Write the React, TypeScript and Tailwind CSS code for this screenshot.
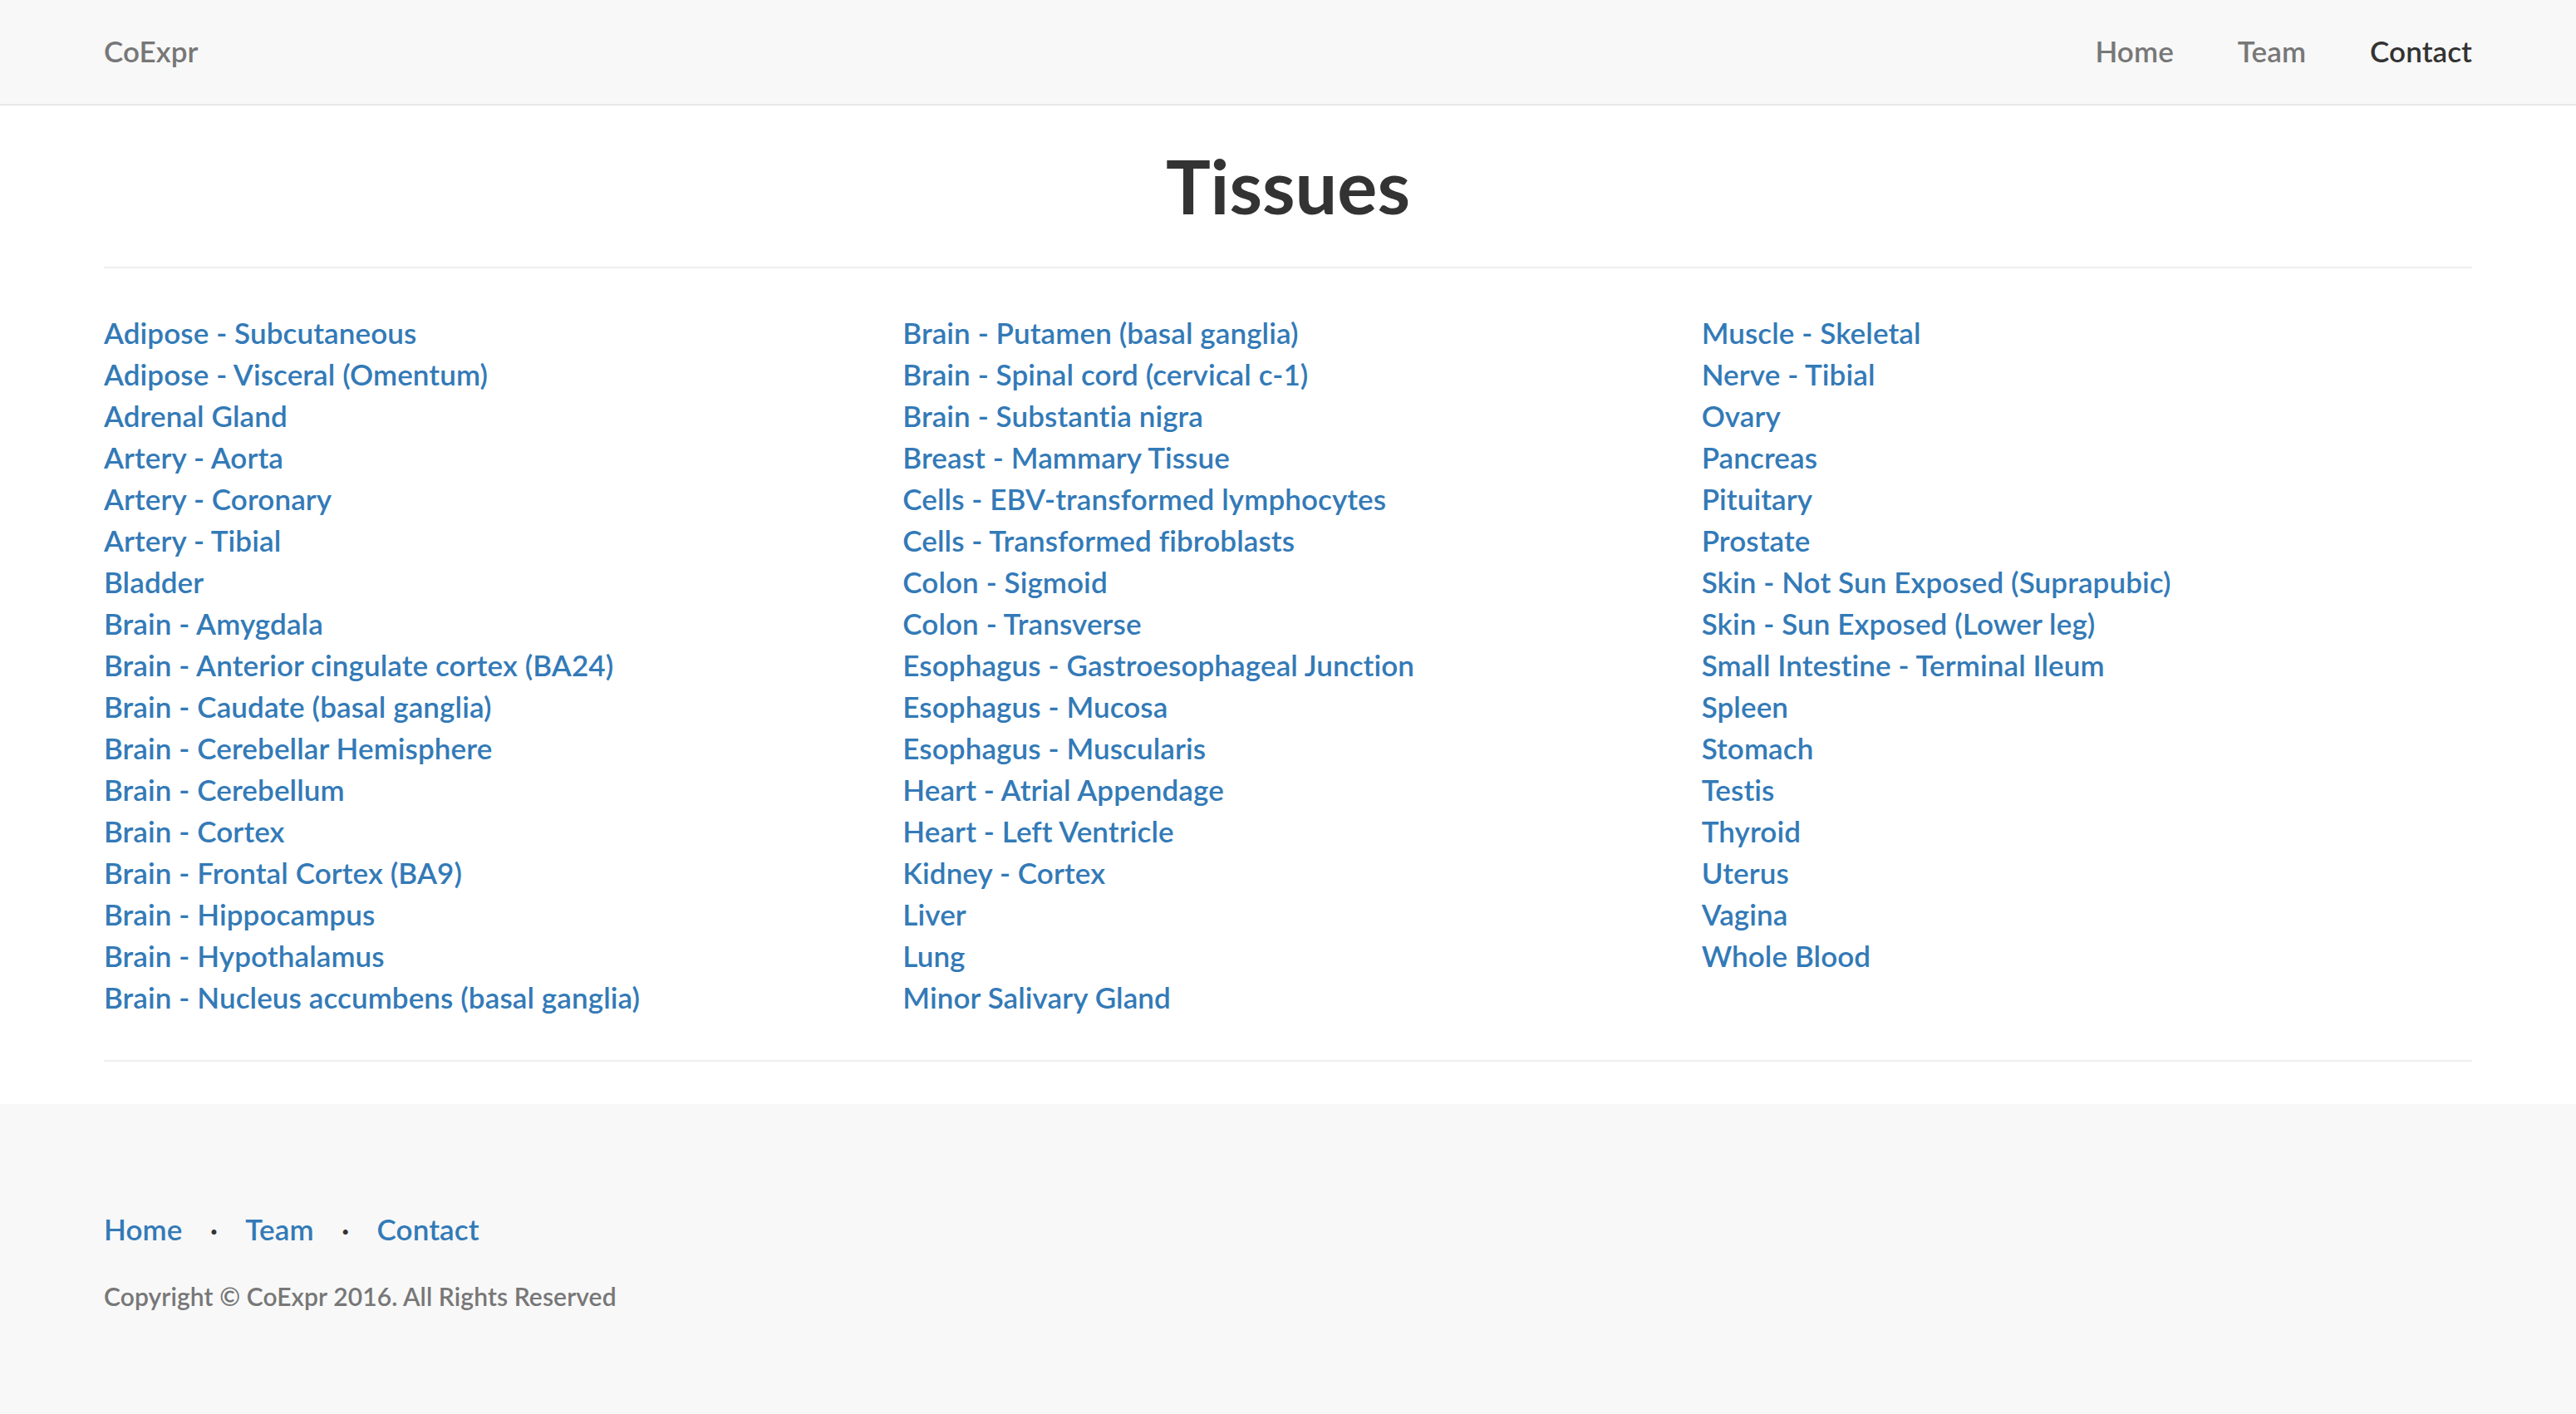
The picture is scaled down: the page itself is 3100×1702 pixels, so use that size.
import React from "react";

const col1 = [
  "Adipose - Subcutaneous",
  "Adipose - Visceral (Omentum)",
  "Adrenal Gland",
  "Artery - Aorta",
  "Artery - Coronary",
  "Artery - Tibial",
  "Bladder",
  "Brain - Amygdala",
  "Brain - Anterior cingulate cortex (BA24)",
  "Brain - Caudate (basal ganglia)",
  "Brain - Cerebellar Hemisphere",
  "Brain - Cerebellum",
  "Brain - Cortex",
  "Brain - Frontal Cortex (BA9)",
  "Brain - Hippocampus",
  "Brain - Hypothalamus",
  "Brain - Nucleus accumbens (basal ganglia)",
];
const col2 = [
  "Brain - Putamen (basal ganglia)",
  "Brain - Spinal cord (cervical c-1)",
  "Brain - Substantia nigra",
  "Breast - Mammary Tissue",
  "Cells - EBV-transformed lymphocytes",
  "Cells - Transformed fibroblasts",
  "Colon - Sigmoid",
  "Colon - Transverse",
  "Esophagus - Gastroesophageal Junction",
  "Esophagus - Mucosa",
  "Esophagus - Muscularis",
  "Heart - Atrial Appendage",
  "Heart - Left Ventricle",
  "Kidney - Cortex",
  "Liver",
  "Lung",
  "Minor Salivary Gland",
];
const col3 = [
  "Muscle - Skeletal",
  "Nerve - Tibial",
  "Ovary",
  "Pancreas",
  "Pituitary",
  "Prostate",
  "Skin - Not Sun Exposed (Suprapubic)",
  "Skin - Sun Exposed (Lower leg)",
  "Small Intestine - Terminal Ileum",
  "Spleen",
  "Stomach",
  "Testis",
  "Thyroid",
  "Uterus",
  "Vagina",
  "Whole Blood",
];

function Column({ items }: { items: string[] }) {
  return (
    <ul className="flex flex-col">
      {items.map((t) => (
        <li key={t} className="text-[35px] leading-[50px] tracking-[0.1px]">
          <a href="#" className="text-[#337ab7]">
            {t}
          </a>
        </li>
      ))}
    </ul>
  );
}

export default function App() {
  return (
    <div className="min-h-screen bg-white font-['Lato','Liberation_Sans',sans-serif] font-semibold text-[#333]">
      <nav className="h-[127px] bg-[#f8f8f8] border-b-2 border-[#e7e7e7]">
        <div className="h-full px-[125px] pb-[3px] flex items-center justify-between text-[35px] leading-[50px] tracking-[0.1px]">
          <a href="#" className="text-[#777]">CoExpr</a>
          <div className="flex items-center gap-[77px]">
            <a href="#" className="text-[#777]">Home</a>
            <a href="#" className="text-[#777]">Team</a>
            <a href="#" className="text-[#333]">Contact</a>
          </div>
        </div>
      </nav>

      <main className="px-[125px]">
        <h1 className="mt-[47px] text-center text-[90px] leading-[99px] font-bold text-[#333]">
          Tissues
        </h1>
        <div className="mt-[48px] h-[2px] bg-[#eeeeee]" />
        <div className="mt-[52px] grid grid-cols-3 gap-x-[34px]">
          <Column items={col1} />
          <Column items={col2} />
          <Column items={col3} />
        </div>
        <div className="mt-[51px] h-[2px] bg-[#eeeeee]" />
      </main>

      <footer className="mt-[51px] bg-[#f8f8f8] px-[125px] pt-[125px] pb-[125px]">
        <div className="flex items-center text-[35px] leading-[50px] tracking-[0.1px]">
          <a href="#" className="text-[#337ab7]">Home</a>
          <span className="w-[76px] text-center text-[#333]">·</span>
          <a href="#" className="text-[#337ab7]">Team</a>
          <span className="w-[76px] text-center text-[#333]">·</span>
          <a href="#" className="text-[#337ab7]">Contact</a>
        </div>
        <p className="mt-[35px] text-[30px] leading-[42px] tracking-[0.1px] text-[#777]">
          Copyright © CoExpr 2016. All Rights Reserved
        </p>
      </footer>
    </div>
  );
}
